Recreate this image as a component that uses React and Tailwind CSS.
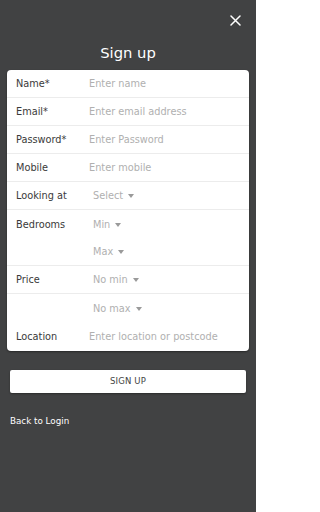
import React from 'react';

const font = { fontFamily: '"DejaVu Sans", "Noto Sans", sans-serif' };

function Caret() {
  return <span className="ml-[5px] mb-[1px] inline-block w-0 h-0 border-l-[3.5px] border-r-[3.5px] border-t-[4px] border-l-transparent border-r-transparent border-t-[#9a9a9a]" />;
}

function Row({ label, children, line = true }) {
  return (
    <div className={`flex items-center h-[28px] pt-[2px] ${line ? 'border-b border-[#ececec]' : ''}`}>
      <div className="w-[82px] pl-[9px] text-[9.75px] text-[#3a3a3a]">{label}</div>
      <div className="flex-1 text-[9.75px] text-[#b0b0b0]">{children}</div>
    </div>
  );
}

function Select({ text }) {
  return (
    <span className="pl-[4px] inline-flex items-center">
      {text}
      <Caret />
    </span>
  );
}

export default function App() {
  return (
    <div className="w-[256px] h-[512px] bg-[#414243] flex flex-col" style={font}>
      {/* Cerrar */}
      <div className="flex justify-end pt-[15px] pr-[15px] h-[36px]">
        <svg width="11" height="11" viewBox="0 0 11 11">
          <path d="M1 1 L10 10 M10 1 L1 10" stroke="#ffffff" strokeWidth="1.5" strokeLinecap="round" />
        </svg>
      </div>

      <h1 className="text-center text-white text-[14.75px] leading-[20px] mt-[7px]">Sign up</h1>

      {/* Formulario */}
      <div className="mx-[7px] mt-[7px] pb-[1px] bg-white rounded-[4px] shadow-[0_1px_2px_rgba(0,0,0,0.4)] overflow-hidden">
        <Row label="Name*">Enter name</Row>
        <Row label="Email*">Enter email address</Row>
        <Row label="Password*">Enter Password</Row>
        <Row label="Mobile">Enter mobile</Row>
        <Row label="Looking at"><Select text="Select" /></Row>
        <Row label="Bedrooms" line={false}><Select text="Min" /></Row>
        <Row label=""><Select text="Max" /></Row>
        <Row label="Price"><Select text="No min" /></Row>
        <Row label="" line={false}><Select text="No max" /></Row>
        <Row label="Location" line={false}>Enter location or postcode</Row>
      </div>

      <button className="mx-[10px] mt-[19px] h-[23px] bg-white rounded-[2px] shadow-[0_1px_2px_rgba(0,0,0,0.35)] text-[8.5px] text-[#444444] tracking-[0.02em]">
        SIGN UP
      </button>

      <div className="mx-[10px] mt-[22px] text-white text-[8.75px]">Back to Login</div>
    </div>
  );
}
